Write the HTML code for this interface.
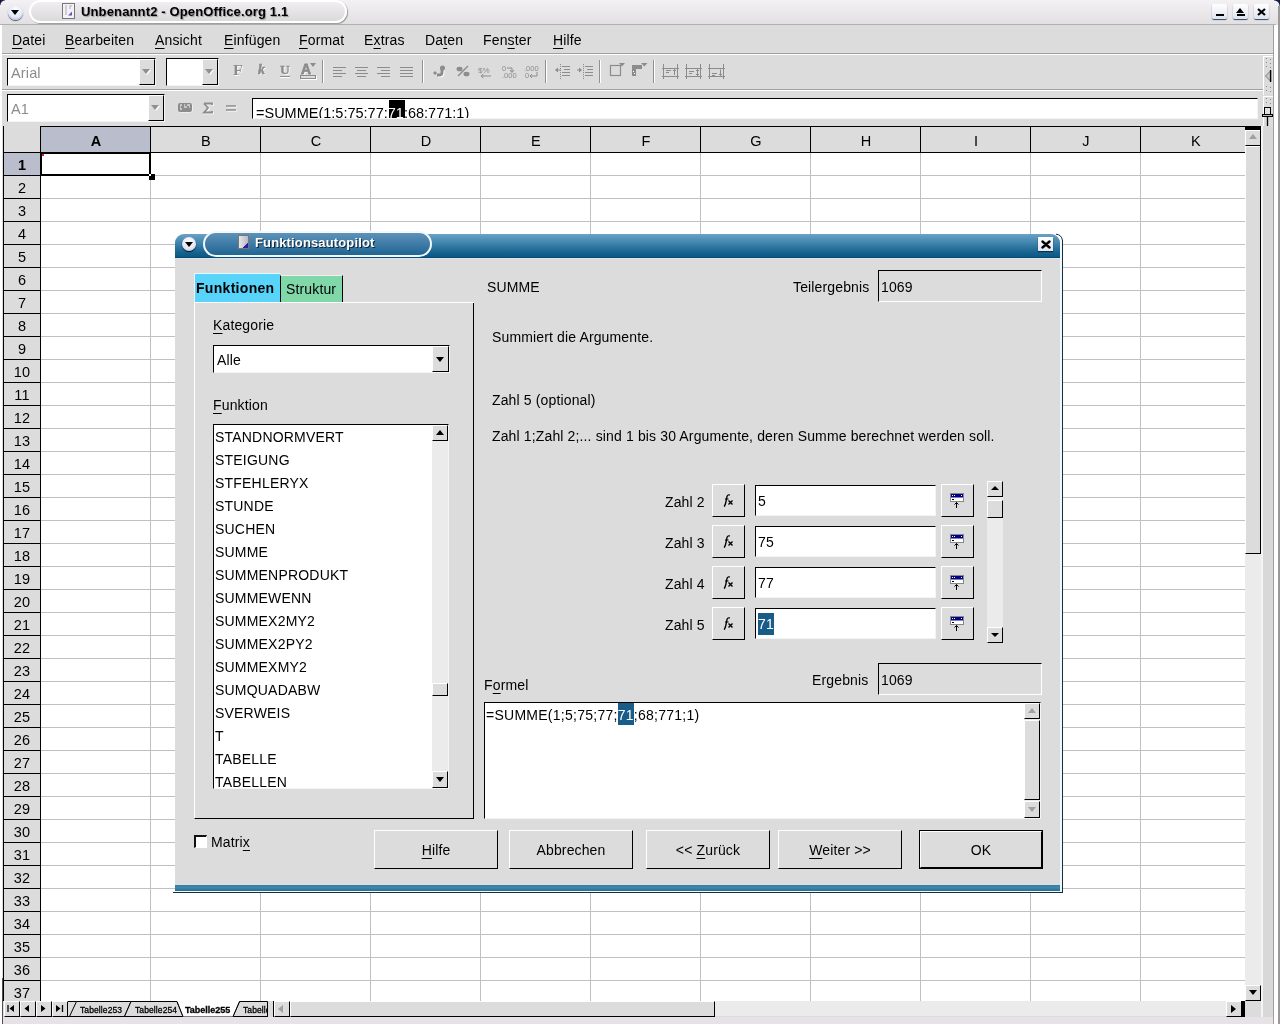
<!DOCTYPE html><html><head><meta charset="utf-8"><style>
*{box-sizing:border-box;margin:0;padding:0}
html,body{width:1280px;height:1024px;overflow:hidden;background:#dcdcdc;font-family:"Liberation Sans",sans-serif;position:relative;color:#000}
div,span{position:absolute}
.u{text-decoration:underline;text-underline-offset:3px;text-decoration-thickness:1px;position:static}
.t{white-space:nowrap;font-size:14px;line-height:16px;letter-spacing:0.14px}
.b3{background:#dcdcdc;border-top:1px solid #fff;border-left:1px solid #fff;border-right:1px solid #000;border-bottom:1px solid #000}
.sunk{background:#fff;border-top:1px solid #000;border-left:1px solid #000;border-right:1px solid #f4f4f4;border-bottom:1px solid #f4f4f4}
.hl{left:0;height:1px;background:#c0c0c0}
.vl{top:0;width:1px;background:#c0c0c0}
</style></head><body><div id="root" style="left:0;top:0;width:1280px;height:1024px;background:#dcdcdc;will-change:transform;overflow:hidden">
<div style="left:0;top:0;width:1280px;height:25px;background:linear-gradient(#f3f1f3,#e2dfe2);"></div>
<div style="left:0;top:24px;width:1276px;height:1px;background:#b0b0b0"></div>
<div style="left:0;top:0;width:5px;height:5px;background:radial-gradient(circle at 100% 100%,transparent 4px,#1a1a40 5px)"></div>
<div style="left:1274px;top:0;width:6px;height:6px;background:radial-gradient(circle at 0% 100%,transparent 5px,#1a1a40 6px)"></div>
<div style="left:8px;top:5px;width:15px;height:15px;border-radius:50%;background:radial-gradient(circle at 50% 35%,#fff,#dfe6f5 60%,#8b95b0);box-shadow:0 1px 1px #556"></div>
<div style="left:11px;top:10px;width:0;height:0;border-left:4.5px solid transparent;border-right:4.5px solid transparent;border-top:5px solid #000"></div>
<div style="left:29px;top:0px;width:318px;height:23px;border-radius:12px;border:2px solid #fff;background:linear-gradient(#f0eef0,#dcd9dc);box-shadow:1px 1px 1px #999"></div>
<svg style="position:absolute;left:62px;top:3px" width="13" height="16"><rect x="0.5" y="0.5" width="12" height="15" fill="#f4f2f8" stroke="#777"/><path d="M3 3H5M7 3H10M3 5H5M7 5H9M3 7H5M3 9H5M3 11H5" stroke="#aaa" stroke-width="1"/><path d="M6 12.5L10 8.5V12.5Z" fill="#6a58b0"/></svg>
<div class="t" style="left:81px;top:4px;font-size:13px;font-weight:bold;text-shadow:1px 1px 1px #999">Unbenannt2 - OpenOffice.org 1.1</div>
<div style="left:1212px;top:4px;width:15px;height:15px;border-radius:2px;background:linear-gradient(#fff,#dde4f0);box-shadow:0 1px 1px #345"></div>
<div style="left:1233px;top:4px;width:15px;height:15px;border-radius:2px;background:linear-gradient(#fff,#dde4f0);box-shadow:0 1px 1px #345"></div>
<div style="left:1254px;top:4px;width:15px;height:15px;border-radius:2px;background:linear-gradient(#fff,#dde4f0);box-shadow:0 1px 1px #345"></div>
<div style="left:1216px;top:14px;width:8px;height:2px;background:#000"></div>
<div style="left:1236px;top:8px;width:0;height:0;border-left:4.5px solid transparent;border-right:4.5px solid transparent;border-bottom:5px solid #000"></div>
<div style="left:1237px;top:14px;width:8px;height:2px;background:#000"></div>
<svg style="position:absolute;left:1257px;top:8px" width="9" height="8"><path d="M1 1L8 7M8 1L1 7" stroke="#000" stroke-width="2.2"/></svg>
<div class="t" style="left:12px;top:32px;font-size:14px;letter-spacing:0.15px"><span class="u">D</span>atei</div>
<div class="t" style="left:65px;top:32px;font-size:14px;letter-spacing:0.15px"><span class="u">B</span>earbeiten</div>
<div class="t" style="left:155px;top:32px;font-size:14px;letter-spacing:0.15px"><span class="u">A</span>nsicht</div>
<div class="t" style="left:224px;top:32px;font-size:14px;letter-spacing:0.15px"><span class="u">E</span>infügen</div>
<div class="t" style="left:299px;top:32px;font-size:14px;letter-spacing:0.15px"><span class="u">F</span>ormat</div>
<div class="t" style="left:364px;top:32px;font-size:14px;letter-spacing:0.15px">E<span class="u">x</span>tras</div>
<div class="t" style="left:425px;top:32px;font-size:14px;letter-spacing:0.15px">Da<span class="u">t</span>en</div>
<div class="t" style="left:483px;top:32px;font-size:14px;letter-spacing:0.15px">Fen<span class="u">s</span>ter</div>
<div class="t" style="left:553px;top:32px;font-size:14px;letter-spacing:0.15px"><span class="u">H</span>ilfe</div>
<div style="left:2px;top:53px;width:1271px;height:1px;background:#a0a0a0"></div>
<div style="left:2px;top:54px;width:1271px;height:1px;background:#fff"></div>
<div style="left:2px;top:89px;width:1271px;height:1px;background:#a0a0a0"></div>
<div style="left:2px;top:90px;width:1271px;height:1px;background:#fff"></div>
<div style="left:7px;top:58px;width:149px;height:28px;background:#fff;border-top:1px solid #000;border-left:1px solid #000;border-right:1px solid #f4f4f4;border-bottom:1px solid #f4f4f4"></div>
<div style="left:139px;top:59px;width:16px;height:26px;background:#dcdcdc;border-top:1px solid #fff;border-left:1px solid #fff;border-right:1px solid #000;border-bottom:1px solid #000"></div>
<div style="left:143px;top:70px;width:0;height:0;border-left:4px solid transparent;border-right:4px solid transparent;border-top:5px solid #fff"></div>
<div style="left:142px;top:69px;width:0;height:0;border-left:4px solid transparent;border-right:4px solid transparent;border-top:5px solid #909090"></div>
<div class="t" style="left:11px;top:65px;font-size:14.5px;color:#8c8c8c">Arial</div>
<div style="left:166px;top:58px;width:53px;height:28px;background:#fff;border-top:1px solid #000;border-left:1px solid #000;border-right:1px solid #f4f4f4;border-bottom:1px solid #f4f4f4"></div>
<div style="left:202px;top:59px;width:16px;height:26px;background:#dcdcdc;border-top:1px solid #fff;border-left:1px solid #fff;border-right:1px solid #000;border-bottom:1px solid #000"></div>
<div style="left:206px;top:70px;width:0;height:0;border-left:4px solid transparent;border-right:4px solid transparent;border-top:5px solid #fff"></div>
<div style="left:205px;top:69px;width:0;height:0;border-left:4px solid transparent;border-right:4px solid transparent;border-top:5px solid #909090"></div>
<div class="t" style="left:233px;top:62px;font:bold 14.5px 'Liberation Serif',serif;color:#8c8c8c;letter-spacing:0;text-shadow:1px 1px 0 #fff;transform:scaleX(1.12);transform-origin:0 0">F</div>
<div class="t" style="left:258px;top:62px;font:bold italic 14px 'Liberation Serif',serif;color:#8c8c8c;text-shadow:1px 1px 0 #fff;-webkit-text-stroke:0.5px #8c8c8c">k</div>
<div class="t" style="left:280px;top:62px;font:bold 13.5px 'Liberation Serif',serif;color:#8c8c8c;text-shadow:1px 1px 0 #fff;-webkit-text-stroke:0.3px #8c8c8c">U</div>
<div style="left:280px;top:76px;width:10px;height:1px;background:#8c8c8c;box-shadow:0 1px 0 #fff"></div>
<div class="t" style="left:301px;top:61px;font:bold 14px 'Liberation Sans',sans-serif;color:#8c8c8c;text-shadow:1px 1px 0 #fff;-webkit-text-stroke:0.8px #8c8c8c">A</div>
<div style="left:300px;top:75px;width:16px;height:4px;border:1px solid #8c8c8c;box-shadow:1px 1px 0 #fff"></div>
<div style="left:310px;top:63px;width:0;height:0;border-left:3.5px solid transparent;border-right:3.5px solid transparent;border-top:4px solid #8c8c8c"></div>
<div style="left:322px;top:60px;width:1px;height:23px;background:#909090"></div>
<div style="left:323px;top:60px;width:1px;height:23px;background:#fff"></div>
<div style="left:333px;top:67px;width:13px;height:1px;background:#8c8c8c"></div>
<div style="left:333px;top:70px;width:9px;height:1px;background:#8c8c8c"></div>
<div style="left:333px;top:73px;width:13px;height:1px;background:#8c8c8c"></div>
<div style="left:333px;top:76px;width:9px;height:1px;background:#8c8c8c"></div>
<div style="left:355px;top:67px;width:13px;height:1px;background:#8c8c8c"></div>
<div style="left:357px;top:70px;width:9px;height:1px;background:#8c8c8c"></div>
<div style="left:355px;top:73px;width:13px;height:1px;background:#8c8c8c"></div>
<div style="left:357px;top:76px;width:9px;height:1px;background:#8c8c8c"></div>
<div style="left:377px;top:67px;width:13px;height:1px;background:#8c8c8c"></div>
<div style="left:381px;top:70px;width:9px;height:1px;background:#8c8c8c"></div>
<div style="left:377px;top:73px;width:13px;height:1px;background:#8c8c8c"></div>
<div style="left:381px;top:76px;width:9px;height:1px;background:#8c8c8c"></div>
<div style="left:400px;top:67px;width:13px;height:1px;background:#8c8c8c"></div>
<div style="left:400px;top:70px;width:13px;height:1px;background:#8c8c8c"></div>
<div style="left:400px;top:73px;width:13px;height:1px;background:#8c8c8c"></div>
<div style="left:400px;top:76px;width:13px;height:1px;background:#8c8c8c"></div>
<div style="left:422px;top:60px;width:1px;height:23px;background:#909090"></div>
<div style="left:423px;top:60px;width:1px;height:23px;background:#fff"></div>
<svg style="position:absolute;left:428px;top:58px" width="300" height="26" fill="none" stroke="#8c8c8c"><g transform="translate(1,1)" stroke="#fff" fill="#fff" opacity="0.9"><path d="M14 9V14Q14 17 11 17H9" stroke-width="3"/></g><path d="M14 9V14Q14 17 11 17H9" stroke-width="3"/><circle cx="14.5" cy="10" r="2.5" fill="#8c8c8c" stroke="none"/><path d="M5 15L7 13L9 15L7 17Z" fill="#8c8c8c" stroke="none"/><path d="M30 18L40 8" stroke-width="1.5"/><ellipse cx="31.5" cy="11" rx="3" ry="2.3" fill="#8c8c8c" stroke="none"/><ellipse cx="38.5" cy="16" rx="3" ry="2.3" fill="#8c8c8c" stroke="none"/><text x="50" y="15" font-family="Liberation Sans" font-size="8" fill="#8c8c8c" stroke="none">$%</text><path d="M53 18H63M53 18L55.5 16M53 18L55.5 20" stroke-width="1"/><text x="74" y="13" font-family="Liberation Sans" font-size="7.5" fill="#8c8c8c" stroke="none">0</text><path d="M79 10H84V14M82 12L84 14.5L86 12" stroke-width="1"/><text x="74" y="20" font-family="Liberation Sans" font-size="7.5" fill="#8c8c8c" stroke="none">.000</text><text x="96" y="13" font-family="Liberation Sans" font-size="7.5" fill="#8c8c8c" stroke="none">.000</text><text x="97" y="20" font-family="Liberation Sans" font-size="7.5" fill="#8c8c8c" stroke="none">0</text><path d="M109 14V18H102M104 16L102 18L104 20" stroke-width="1"/><path d="M134 8.5H142M136 11.5H142M134 14.5H142M134 17.5H142" stroke-width="1"/><path d="M132.5 6V21" stroke-width="1" stroke-dasharray="1 1"/><path d="M127 12L130 9.5V14.5Z" fill="#8c8c8c" stroke="none"/><path d="M130 12H133" stroke-width="1"/><path d="M157 8.5H165M159 11.5H165M157 14.5H165M157 17.5H165" stroke-width="1"/><path d="M155.5 6V21" stroke-width="1" stroke-dasharray="1 1"/><path d="M154 12L151 9.5V14.5Z" fill="#8c8c8c" stroke="none"/><path d="M149 12H152" stroke-width="1"/><rect x="182.5" y="7.5" width="10" height="10" stroke-width="1.2"/><path d="M191 5H197L194 8.5Z" fill="#8c8c8c" stroke="none"/><path d="M204 7H214V11H208V18H204Z" fill="#8c8c8c" stroke="none"/><path d="M213 5H219.5L216.3 8.5Z" fill="#8c8c8c" stroke="none"/><rect x="205" y="13" width="1" height="1" fill="#fff" stroke="none"/><rect x="206" y="15" width="1" height="1" fill="#fff" stroke="none"/><path d="M235.5 6V21M249.5 6V21M234 10.5H251M234 18.5H251" stroke-width="1"/><path d="M238 12.5H243M238 14.5H241M246.5 17V11.5M245 13L246.5 11.5L248 13" stroke-width="1"/><path d="M258.5 6V21M272.5 6V21M257 10.5H274M257 18.5H274" stroke-width="1"/><path d="M261 13.5H266M261 15.5H264M269.5 11.5V17.5M268 13L269.5 11.5L271 13M268 16L269.5 17.5L271 16" stroke-width="1"/><path d="M281.5 6V21M295.5 6V21M280 10.5H297M280 18.5H297" stroke-width="1"/><path d="M284 15.5H289M284 17.5H287M292.5 11.5V17.5M291 16L292.5 17.5L294 16" stroke-width="1"/></svg>
<div style="left:545px;top:60px;width:1px;height:23px;background:#909090"></div>
<div style="left:546px;top:60px;width:1px;height:23px;background:#fff"></div>
<div style="left:599px;top:60px;width:1px;height:23px;background:#909090"></div>
<div style="left:600px;top:60px;width:1px;height:23px;background:#fff"></div>
<div style="left:653px;top:60px;width:1px;height:23px;background:#909090"></div>
<div style="left:654px;top:60px;width:1px;height:23px;background:#fff"></div>
<div style="left:1263px;top:56px;width:10px;height:39px;background:#dcdcdc;border-left:1px solid #fff;border-top:1px solid #fff"></div>
<div style="left:1266px;top:58px;width:1px;height:1px;background:#888"></div><div style="left:1270px;top:59px;width:1px;height:1px;background:#888"></div>
<div style="left:1266px;top:62px;width:1px;height:1px;background:#888"></div><div style="left:1270px;top:63px;width:1px;height:1px;background:#888"></div>
<div style="left:1266px;top:66px;width:1px;height:1px;background:#888"></div><div style="left:1270px;top:67px;width:1px;height:1px;background:#888"></div>
<div style="left:1266px;top:86px;width:1px;height:1px;background:#888"></div><div style="left:1270px;top:87px;width:1px;height:1px;background:#888"></div>
<div style="left:1266px;top:90px;width:1px;height:1px;background:#888"></div><div style="left:1270px;top:91px;width:1px;height:1px;background:#888"></div>
<svg style="position:absolute;left:1265px;top:70px" width="7" height="12"><path d="M6 0.5L0.5 6L6 11.5Z" fill="#c8c8c8" stroke="#777" stroke-width="1"/><path d="M5.5 0V12" stroke="#000" stroke-width="1.2"/></svg>
<div style="left:7px;top:94px;width:158px;height:28px;background:#fff;border-top:1px solid #000;border-left:1px solid #000;border-right:1px solid #f4f4f4;border-bottom:1px solid #f4f4f4"></div>
<div style="left:148px;top:95px;width:16px;height:26px;background:#dcdcdc;border-top:1px solid #fff;border-left:1px solid #fff;border-right:1px solid #000;border-bottom:1px solid #000"></div>
<div style="left:152px;top:106px;width:0;height:0;border-left:4px solid transparent;border-right:4px solid transparent;border-top:5px solid #fff"></div>
<div style="left:151px;top:105px;width:0;height:0;border-left:4px solid transparent;border-right:4px solid transparent;border-top:5px solid #909090"></div>
<div class="t" style="left:11px;top:101px;font-size:14.5px;color:#8c8c8c">A1</div>
<svg style="position:absolute;left:176px;top:101px" width="64" height="14"><rect x="2.5" y="2.5" width="14" height="9" rx="2" fill="#fff" stroke="none"/><rect x="2" y="2" width="14" height="9" rx="2" fill="#8c8c8c"/><path d="M4 4H6M4 6H5M4 8H6M8 4H9M8 6H11M11 4H14M13 6H14" stroke="#fff" stroke-width="1"/><path d="M28 2.5H36V4M28 2.5L32 7L28 11.5H36V10" fill="none" stroke="#fff" stroke-width="2" transform="translate(0.7,0.7)"/><path d="M28 2.5H36V4M28 2.5L32 7L28 11.5H36V10" fill="none" stroke="#8c8c8c" stroke-width="1.8"/><path d="M50 5H60M50 9H60" stroke="#fff" stroke-width="1.5" transform="translate(0.7,0.7)"/><path d="M50 5H60M50 9H60" stroke="#8c8c8c" stroke-width="1.6"/></svg>
<div style="left:252px;top:98px;width:1006px;height:21px;background:#fff;border-top:1px solid #000;border-left:1px solid #000;border-right:1px solid #f4f4f4;border-bottom:1px solid #f4f4f4;overflow:hidden"><div style="left:136px;top:1px;width:16px;height:18px;background:#000"></div><span id="fx" class="t" style="left:3px;top:6px;font-size:14.5px;letter-spacing:0px">=SUMME(1;5;75;77;<span style="position:static;color:#fff">71</span>;68;771;1)</span></div>
<div style="left:1263px;top:96px;width:10px;height:40px;background:#dcdcdc;border-left:1px solid #fff;border-top:1px solid #fff"></div>
<div style="left:1266px;top:98px;width:1px;height:1px;background:#888"></div><div style="left:1270px;top:99px;width:1px;height:1px;background:#888"></div>
<div style="left:1266px;top:102px;width:1px;height:1px;background:#888"></div><div style="left:1270px;top:103px;width:1px;height:1px;background:#888"></div>
<div style="left:1266px;top:128px;width:1px;height:1px;background:#888"></div><div style="left:1270px;top:129px;width:1px;height:1px;background:#888"></div>
<div style="left:1266px;top:132px;width:1px;height:1px;background:#888"></div><div style="left:1270px;top:133px;width:1px;height:1px;background:#888"></div>
<svg style="position:absolute;left:1262px;top:107px" width="11" height="19"><rect x="2.5" y="0.5" width="6" height="7" fill="#e0e0e0" stroke="#000"/><rect x="0.5" y="7.5" width="10" height="2" fill="#bbb" stroke="#000"/><path d="M5.5 10V19" stroke="#000" stroke-width="1.3"/></svg>
<div style="left:3px;top:126px;width:1259px;height:876px;background:#fff"></div>
<div style="left:3px;top:126px;width:1242px;height:27px;background:#dcdcdc;border-top:1px solid #000;border-bottom:1px solid #000"></div>
<div style="left:40px;top:127px;width:110px;height:25px;background:#babdcc"></div>
<div style="left:3px;top:126px;width:38px;height:875px;background:#dcdcdc;border-left:1px solid #000;border-right:1px solid #000"></div>
<div style="left:4px;top:153px;width:36px;height:22px;background:#babdcc"></div>
<div style="left:4px;top:152px;width:37px;height:1px;background:#000"></div>
<div style="left:40px;top:127px;width:1px;height:25px;background:#000"></div>
<div class="t" style="left:41px;top:132.5px;width:110px;text-align:center;font-size:14.5px;font-weight:bold">A</div>
<div style="left:150px;top:127px;width:1px;height:25px;background:#000"></div>
<div class="vl" style="left:150px;top:153px;height:848px"></div>
<div class="t" style="left:151px;top:132.5px;width:110px;text-align:center;font-size:14.5px;font-weight:normal">B</div>
<div style="left:260px;top:127px;width:1px;height:25px;background:#000"></div>
<div class="vl" style="left:260px;top:153px;height:848px"></div>
<div class="t" style="left:261px;top:132.5px;width:110px;text-align:center;font-size:14.5px;font-weight:normal">C</div>
<div style="left:370px;top:127px;width:1px;height:25px;background:#000"></div>
<div class="vl" style="left:370px;top:153px;height:848px"></div>
<div class="t" style="left:371px;top:132.5px;width:110px;text-align:center;font-size:14.5px;font-weight:normal">D</div>
<div style="left:480px;top:127px;width:1px;height:25px;background:#000"></div>
<div class="vl" style="left:480px;top:153px;height:848px"></div>
<div class="t" style="left:481px;top:132.5px;width:110px;text-align:center;font-size:14.5px;font-weight:normal">E</div>
<div style="left:590px;top:127px;width:1px;height:25px;background:#000"></div>
<div class="vl" style="left:590px;top:153px;height:848px"></div>
<div class="t" style="left:591px;top:132.5px;width:110px;text-align:center;font-size:14.5px;font-weight:normal">F</div>
<div style="left:700px;top:127px;width:1px;height:25px;background:#000"></div>
<div class="vl" style="left:700px;top:153px;height:848px"></div>
<div class="t" style="left:701px;top:132.5px;width:110px;text-align:center;font-size:14.5px;font-weight:normal">G</div>
<div style="left:810px;top:127px;width:1px;height:25px;background:#000"></div>
<div class="vl" style="left:810px;top:153px;height:848px"></div>
<div class="t" style="left:811px;top:132.5px;width:110px;text-align:center;font-size:14.5px;font-weight:normal">H</div>
<div style="left:920px;top:127px;width:1px;height:25px;background:#000"></div>
<div class="vl" style="left:920px;top:153px;height:848px"></div>
<div class="t" style="left:921px;top:132.5px;width:110px;text-align:center;font-size:14.5px;font-weight:normal">I</div>
<div style="left:1030px;top:127px;width:1px;height:25px;background:#000"></div>
<div class="vl" style="left:1030px;top:153px;height:848px"></div>
<div class="t" style="left:1031px;top:132.5px;width:110px;text-align:center;font-size:14.5px;font-weight:normal">J</div>
<div style="left:1140px;top:127px;width:1px;height:25px;background:#000"></div>
<div class="vl" style="left:1140px;top:153px;height:848px"></div>
<div class="t" style="left:1141px;top:132.5px;width:110px;text-align:center;font-size:14.5px;font-weight:normal">K</div>
<div class="hl" style="left:41px;top:175px;width:1204px"></div>
<div style="left:4px;top:175px;width:36px;height:1px;background:#000"></div>
<div class="t" style="left:4px;top:157px;width:36px;text-align:center;font-size:14.5px;font-weight:bold">1</div>
<div class="hl" style="left:41px;top:198px;width:1204px"></div>
<div style="left:4px;top:198px;width:36px;height:1px;background:#000"></div>
<div class="t" style="left:4px;top:180px;width:36px;text-align:center;font-size:14.5px;font-weight:normal">2</div>
<div class="hl" style="left:41px;top:221px;width:1204px"></div>
<div style="left:4px;top:221px;width:36px;height:1px;background:#000"></div>
<div class="t" style="left:4px;top:203px;width:36px;text-align:center;font-size:14.5px;font-weight:normal">3</div>
<div class="hl" style="left:41px;top:244px;width:1204px"></div>
<div style="left:4px;top:244px;width:36px;height:1px;background:#000"></div>
<div class="t" style="left:4px;top:226px;width:36px;text-align:center;font-size:14.5px;font-weight:normal">4</div>
<div class="hl" style="left:41px;top:267px;width:1204px"></div>
<div style="left:4px;top:267px;width:36px;height:1px;background:#000"></div>
<div class="t" style="left:4px;top:249px;width:36px;text-align:center;font-size:14.5px;font-weight:normal">5</div>
<div class="hl" style="left:41px;top:290px;width:1204px"></div>
<div style="left:4px;top:290px;width:36px;height:1px;background:#000"></div>
<div class="t" style="left:4px;top:272px;width:36px;text-align:center;font-size:14.5px;font-weight:normal">6</div>
<div class="hl" style="left:41px;top:313px;width:1204px"></div>
<div style="left:4px;top:313px;width:36px;height:1px;background:#000"></div>
<div class="t" style="left:4px;top:295px;width:36px;text-align:center;font-size:14.5px;font-weight:normal">7</div>
<div class="hl" style="left:41px;top:336px;width:1204px"></div>
<div style="left:4px;top:336px;width:36px;height:1px;background:#000"></div>
<div class="t" style="left:4px;top:318px;width:36px;text-align:center;font-size:14.5px;font-weight:normal">8</div>
<div class="hl" style="left:41px;top:359px;width:1204px"></div>
<div style="left:4px;top:359px;width:36px;height:1px;background:#000"></div>
<div class="t" style="left:4px;top:341px;width:36px;text-align:center;font-size:14.5px;font-weight:normal">9</div>
<div class="hl" style="left:41px;top:382px;width:1204px"></div>
<div style="left:4px;top:382px;width:36px;height:1px;background:#000"></div>
<div class="t" style="left:4px;top:364px;width:36px;text-align:center;font-size:14.5px;font-weight:normal">10</div>
<div class="hl" style="left:41px;top:405px;width:1204px"></div>
<div style="left:4px;top:405px;width:36px;height:1px;background:#000"></div>
<div class="t" style="left:4px;top:387px;width:36px;text-align:center;font-size:14.5px;font-weight:normal">11</div>
<div class="hl" style="left:41px;top:428px;width:1204px"></div>
<div style="left:4px;top:428px;width:36px;height:1px;background:#000"></div>
<div class="t" style="left:4px;top:410px;width:36px;text-align:center;font-size:14.5px;font-weight:normal">12</div>
<div class="hl" style="left:41px;top:451px;width:1204px"></div>
<div style="left:4px;top:451px;width:36px;height:1px;background:#000"></div>
<div class="t" style="left:4px;top:433px;width:36px;text-align:center;font-size:14.5px;font-weight:normal">13</div>
<div class="hl" style="left:41px;top:474px;width:1204px"></div>
<div style="left:4px;top:474px;width:36px;height:1px;background:#000"></div>
<div class="t" style="left:4px;top:456px;width:36px;text-align:center;font-size:14.5px;font-weight:normal">14</div>
<div class="hl" style="left:41px;top:497px;width:1204px"></div>
<div style="left:4px;top:497px;width:36px;height:1px;background:#000"></div>
<div class="t" style="left:4px;top:479px;width:36px;text-align:center;font-size:14.5px;font-weight:normal">15</div>
<div class="hl" style="left:41px;top:520px;width:1204px"></div>
<div style="left:4px;top:520px;width:36px;height:1px;background:#000"></div>
<div class="t" style="left:4px;top:502px;width:36px;text-align:center;font-size:14.5px;font-weight:normal">16</div>
<div class="hl" style="left:41px;top:543px;width:1204px"></div>
<div style="left:4px;top:543px;width:36px;height:1px;background:#000"></div>
<div class="t" style="left:4px;top:525px;width:36px;text-align:center;font-size:14.5px;font-weight:normal">17</div>
<div class="hl" style="left:41px;top:566px;width:1204px"></div>
<div style="left:4px;top:566px;width:36px;height:1px;background:#000"></div>
<div class="t" style="left:4px;top:548px;width:36px;text-align:center;font-size:14.5px;font-weight:normal">18</div>
<div class="hl" style="left:41px;top:589px;width:1204px"></div>
<div style="left:4px;top:589px;width:36px;height:1px;background:#000"></div>
<div class="t" style="left:4px;top:571px;width:36px;text-align:center;font-size:14.5px;font-weight:normal">19</div>
<div class="hl" style="left:41px;top:612px;width:1204px"></div>
<div style="left:4px;top:612px;width:36px;height:1px;background:#000"></div>
<div class="t" style="left:4px;top:594px;width:36px;text-align:center;font-size:14.5px;font-weight:normal">20</div>
<div class="hl" style="left:41px;top:635px;width:1204px"></div>
<div style="left:4px;top:635px;width:36px;height:1px;background:#000"></div>
<div class="t" style="left:4px;top:617px;width:36px;text-align:center;font-size:14.5px;font-weight:normal">21</div>
<div class="hl" style="left:41px;top:658px;width:1204px"></div>
<div style="left:4px;top:658px;width:36px;height:1px;background:#000"></div>
<div class="t" style="left:4px;top:640px;width:36px;text-align:center;font-size:14.5px;font-weight:normal">22</div>
<div class="hl" style="left:41px;top:681px;width:1204px"></div>
<div style="left:4px;top:681px;width:36px;height:1px;background:#000"></div>
<div class="t" style="left:4px;top:663px;width:36px;text-align:center;font-size:14.5px;font-weight:normal">23</div>
<div class="hl" style="left:41px;top:704px;width:1204px"></div>
<div style="left:4px;top:704px;width:36px;height:1px;background:#000"></div>
<div class="t" style="left:4px;top:686px;width:36px;text-align:center;font-size:14.5px;font-weight:normal">24</div>
<div class="hl" style="left:41px;top:727px;width:1204px"></div>
<div style="left:4px;top:727px;width:36px;height:1px;background:#000"></div>
<div class="t" style="left:4px;top:709px;width:36px;text-align:center;font-size:14.5px;font-weight:normal">25</div>
<div class="hl" style="left:41px;top:750px;width:1204px"></div>
<div style="left:4px;top:750px;width:36px;height:1px;background:#000"></div>
<div class="t" style="left:4px;top:732px;width:36px;text-align:center;font-size:14.5px;font-weight:normal">26</div>
<div class="hl" style="left:41px;top:773px;width:1204px"></div>
<div style="left:4px;top:773px;width:36px;height:1px;background:#000"></div>
<div class="t" style="left:4px;top:755px;width:36px;text-align:center;font-size:14.5px;font-weight:normal">27</div>
<div class="hl" style="left:41px;top:796px;width:1204px"></div>
<div style="left:4px;top:796px;width:36px;height:1px;background:#000"></div>
<div class="t" style="left:4px;top:778px;width:36px;text-align:center;font-size:14.5px;font-weight:normal">28</div>
<div class="hl" style="left:41px;top:819px;width:1204px"></div>
<div style="left:4px;top:819px;width:36px;height:1px;background:#000"></div>
<div class="t" style="left:4px;top:801px;width:36px;text-align:center;font-size:14.5px;font-weight:normal">29</div>
<div class="hl" style="left:41px;top:842px;width:1204px"></div>
<div style="left:4px;top:842px;width:36px;height:1px;background:#000"></div>
<div class="t" style="left:4px;top:824px;width:36px;text-align:center;font-size:14.5px;font-weight:normal">30</div>
<div class="hl" style="left:41px;top:865px;width:1204px"></div>
<div style="left:4px;top:865px;width:36px;height:1px;background:#000"></div>
<div class="t" style="left:4px;top:847px;width:36px;text-align:center;font-size:14.5px;font-weight:normal">31</div>
<div class="hl" style="left:41px;top:888px;width:1204px"></div>
<div style="left:4px;top:888px;width:36px;height:1px;background:#000"></div>
<div class="t" style="left:4px;top:870px;width:36px;text-align:center;font-size:14.5px;font-weight:normal">32</div>
<div class="hl" style="left:41px;top:911px;width:1204px"></div>
<div style="left:4px;top:911px;width:36px;height:1px;background:#000"></div>
<div class="t" style="left:4px;top:893px;width:36px;text-align:center;font-size:14.5px;font-weight:normal">33</div>
<div class="hl" style="left:41px;top:934px;width:1204px"></div>
<div style="left:4px;top:934px;width:36px;height:1px;background:#000"></div>
<div class="t" style="left:4px;top:916px;width:36px;text-align:center;font-size:14.5px;font-weight:normal">34</div>
<div class="hl" style="left:41px;top:957px;width:1204px"></div>
<div style="left:4px;top:957px;width:36px;height:1px;background:#000"></div>
<div class="t" style="left:4px;top:939px;width:36px;text-align:center;font-size:14.5px;font-weight:normal">35</div>
<div class="hl" style="left:41px;top:980px;width:1204px"></div>
<div style="left:4px;top:980px;width:36px;height:1px;background:#000"></div>
<div class="t" style="left:4px;top:962px;width:36px;text-align:center;font-size:14.5px;font-weight:normal">36</div>
<div class="hl" style="left:41px;top:1003px;width:1204px"></div>
<div style="left:4px;top:1003px;width:36px;height:1px;background:#000"></div>
<div class="t" style="left:4px;top:985px;width:36px;text-align:center;font-size:14.5px;font-weight:normal">37</div>
<div style="left:40px;top:152px;width:111px;height:24px;border:2px solid #000;background:#fff"></div>
<div style="left:149px;top:174px;width:6px;height:6px;background:#000"></div>
<div style="left:149px;top:174px;width:2px;height:2px;background:#fff"></div>
<div style="left:42px;top:154px;width:2px;height:2px;background:#d02020"></div>
<div style="left:1245px;top:126px;width:16px;height:875px;background:#ebebeb"></div>
<div style="left:1245px;top:126px;width:16px;height:4px;background:#000"></div>
<div style="left:1245px;top:130px;width:16px;height:16px;background:#dcdcdc;border-top:1px solid #fff;border-left:1px solid #fff;border-bottom:1px solid #000;border-right:1px solid #000"></div>
<div style="left:1249px;top:134px;width:0;height:0;border-left:4px solid transparent;border-right:4px solid transparent;border-bottom:5px solid #a0a0a0"></div>
<div style="left:1245px;top:146px;width:16px;height:408px;background:#dcdcdc;border-top:1px solid #fff;border-left:1px solid #fff;border-bottom:1px solid #000;border-right:1px solid #000"></div>
<div style="left:1260px;top:126px;width:1px;height:428px;background:#000"></div>
<div style="left:1245px;top:985px;width:16px;height:16px;background:#dcdcdc;border-top:1px solid #fff;border-left:1px solid #fff;border-bottom:1px solid #000;border-right:1px solid #000"></div>
<div style="left:1249px;top:990px;width:0;height:0;border-left:4px solid transparent;border-right:4px solid transparent;border-top:5px solid #000"></div>
<div style="left:1261px;top:126px;width:12px;height:892px;background:#d8d8d8;border-left:2px solid #f4f4f4;border-bottom:1px solid #a0a0a0"></div>
<div style="left:3px;top:1001px;width:1242px;height:16px;background:#dcdcdc"></div>
<div style="left:0;top:1017px;width:1273px;height:7px;background:#e6e2e6"></div>
<div style="left:2px;top:978px;width:1px;height:46px;background:#505050"></div>
<div style="left:4px;top:1001px;width:16px;height:16px;background:#dcdcdc;border-top:1px solid #fff;border-left:1px solid #fff;border-right:1px solid #000;border-bottom:1px solid #000"></div>
<div style="left:20px;top:1001px;width:16px;height:16px;background:#dcdcdc;border-top:1px solid #fff;border-left:1px solid #fff;border-right:1px solid #000;border-bottom:1px solid #000"></div>
<div style="left:36px;top:1001px;width:16px;height:16px;background:#dcdcdc;border-top:1px solid #fff;border-left:1px solid #fff;border-right:1px solid #000;border-bottom:1px solid #000"></div>
<div style="left:52px;top:1001px;width:16px;height:16px;background:#dcdcdc;border-top:1px solid #fff;border-left:1px solid #fff;border-right:1px solid #000;border-bottom:1px solid #000"></div>
<svg style="position:absolute;left:0;top:1000px" width="70" height="17"><path d="M8 5V12" stroke="#000" stroke-width="1.3"/><path d="M14 5L9.5 8.5L14 12Z" fill="#000"/><path d="M29 5L24.5 8.5L29 12Z" fill="#000"/><path d="M41 5L45.5 8.5L41 12Z" fill="#000"/><path d="M56 5L60.5 8.5L56 12Z" fill="#000"/><path d="M62.5 5V12" stroke="#000" stroke-width="1.3"/></svg>
<svg style="position:absolute;left:0;top:1000px" width="300" height="18"><path d="M68 16.5H268" stroke="#000" stroke-width="1"/><path d="M69.5 16.5L76.5 1.5H131L124.5 16.5Z" fill="#dcdcdc" stroke="#000" stroke-width="1"/><path d="M124.5 16.5L131 1.5H177L183 16.5Z" fill="#dcdcdc" stroke="#000" stroke-width="1"/><path d="M233 16.5L239.5 1.5H267.5V16.5Z" fill="#dcdcdc" stroke="#000" stroke-width="1"/><path d="M177 0.5L183 16.5H233L239.5 0.5Z" fill="#fff"/><path d="M177 1.5L183 16.5M233 16.5L239.5 1.5" stroke="#000" stroke-width="1"/><path d="M68 1.5H76.5" stroke="#000" stroke-width="1"/></svg>
<div class="t" style="left:80px;top:1004px;font-size:8.5px;line-height:12px;letter-spacing:0.1px;-webkit-text-stroke:0.3px #000">Tabelle253</div>
<div class="t" style="left:135px;top:1004px;font-size:8.5px;line-height:12px;letter-spacing:0.1px;-webkit-text-stroke:0.3px #000">Tabelle254</div>
<div class="t" style="left:185px;top:1004px;font-size:9px;line-height:12px;font-weight:bold;letter-spacing:0px;-webkit-text-stroke:0.3px #000">Tabelle255</div>
<div style="left:241px;top:1004px;width:26px;height:12px;overflow:hidden"><span class="t" style="left:2px;top:0;font-size:8.5px;line-height:12px;letter-spacing:0.1px;-webkit-text-stroke:0.3px #000">Tabelle</span></div>
<div style="left:273px;top:1001px;width:1px;height:16px;background:#000"></div>
<div style="left:274px;top:1001px;width:16px;height:16px;background:#dcdcdc;border-top:1px solid #fff;border-left:1px solid #fff;border-right:1px solid #000;border-bottom:1px solid #000"></div>
<div style="left:278px;top:1005px;border-top:4px solid transparent;border-bottom:4px solid transparent;border-right:5px solid #a0a0a0"></div>
<div style="left:290px;top:1001px;width:937px;height:16px;background:#ebebeb;border-bottom:1px solid #dcdcdc"></div>
<div style="left:290px;top:1001px;width:425px;height:16px;background:#dcdcdc;border-top:1px solid #fff;border-left:1px solid #fff;border-right:1px solid #000;border-bottom:1px solid #000"></div>
<div style="left:1226px;top:1001px;width:16px;height:16px;background:#dcdcdc;border-top:1px solid #fff;border-left:1px solid #fff;border-right:1px solid #000;border-bottom:1px solid #000"></div>
<div style="left:1241px;top:1001px;width:4px;height:16px;background:#000"></div>
<div style="left:1231px;top:1005px;border-top:4px solid transparent;border-bottom:4px solid transparent;border-left:5px solid #000"></div>
<div style="left:1245px;top:1001px;width:16px;height:16px;background:#dcdcdc"></div>
<div style="left:175px;top:234px;width:885px;height:658px;background:#dcdcdc;border-radius:9px 9px 0 0;overflow:hidden"><div style="left:0;top:0;width:885px;height:23px;background:linear-gradient(#6aa2c6,#3f84ad 40%,#16638f 80%,#0b5885)"></div><div style="left:0;top:23px;width:885px;height:1px;background:#074a72"></div><div style="left:0;top:24px;width:885px;height:1px;background:#dde6ea"></div><div style="left:0;top:650px;width:885px;height:1px;background:#cfe4f0"></div><div style="left:0;top:651px;width:885px;height:6px;background:linear-gradient(#3f7897,#3f88ae 40%,#2b6f92)"></div><div style="left:0;top:657px;width:885px;height:1px;background:#f0fafd"></div></div>
<div style="left:1060px;top:240px;width:2px;height:652px;background:#f0f8fb"></div>
<div style="left:1062px;top:240px;width:1px;height:653px;background:#12303f"></div>
<div style="left:173px;top:892px;width:890px;height:1px;background:#12303f"></div>
<svg style="position:absolute;left:1054px;top:233px" width="10" height="9"><path d="M2 1.2Q7.5 1.5 8.5 7.5" fill="none" stroke="#12303f" stroke-width="1"/></svg>
<div style="left:182px;top:237px;width:14px;height:14px;border-radius:50%;background:radial-gradient(circle at 50% 35%,#fff,#e6e6f0 60%,#9aa0b8);box-shadow:0 1px 1px #012"></div>
<div style="left:185px;top:242px;width:0;height:0;border-left:4px solid transparent;border-right:4px solid transparent;border-top:5px solid #000"></div>
<div style="left:203px;top:231px;width:229px;height:26px;border-radius:13px;border:2px solid #f4f8fb;background:linear-gradient(#5e92b9,#1f6594)"></div>
<div style="left:238px;top:235px;width:11px;height:14px;background:linear-gradient(90deg,#e8e8e8,#b8b8c8);border:1px solid #777"></div>
<div style="left:242px;top:242px;width:6px;height:6px;background:linear-gradient(135deg,transparent 50%,#3020a0 50%)"></div>
<div class="t" style="left:255px;top:235px;font-size:13px;font-weight:bold;color:#fff;text-shadow:1px 1px 0 #123">Funktionsautopilot</div>
<div style="left:1038px;top:237px;width:15px;height:14px;background:linear-gradient(#fff,#e2e6f0);box-shadow:0 1px 1px #0a3050"></div>
<svg style="position:absolute;left:1041px;top:240px" width="10" height="9"><path d="M1.5 1.5L8.5 7.5M8.5 1.5L1.5 7.5" stroke="#000" stroke-width="2.4" stroke-linecap="round"/></svg>
<div style="left:194px;top:273px;width:86px;height:30px;background:#58d4fa;border-top:1px solid #e8f8ff;border-left:1px solid #e8f8ff"></div>
<div class="t" style="left:196px;top:280px;font-size:14px;font-weight:bold;letter-spacing:0.3px">Funktionen</div>
<div style="left:280px;top:275px;width:63px;height:27px;background:#80d8a8;border-top:1px solid #f0f0f0;border-left:1px solid #000;border-right:1px solid #000"></div>
<div class="t" style="left:286px;top:281px;font-size:14px">Struktur</div>
<div style="left:194px;top:302px;width:280px;height:517px;border-top:1px solid #fff;border-left:1px solid #fff;border-right:1px solid #000;border-bottom:1px solid #000"></div>
<div style="left:280px;top:302px;width:194px;height:1px;background:#fff"></div>
<div class="t" style="left:213px;top:317px;font-size:14px"><span class="u">K</span>ategorie</div>
<div style="left:213px;top:345px;width:237px;height:28px;background:#fff;border-top:1px solid #000;border-left:1px solid #000;border-right:1px solid #f4f4f4;border-bottom:1px solid #f4f4f4"></div>
<div style="left:432px;top:346px;width:17px;height:26px;background:#dcdcdc;border-top:1px solid #fff;border-left:1px solid #fff;border-right:1px solid #000;border-bottom:1px solid #000"></div>
<div style="left:436px;top:357px;border-left:4px solid transparent;border-right:4px solid transparent;border-top:5px solid #000"></div>
<div class="t" style="left:217px;top:352px;font-size:14px">Alle</div>
<div class="t" style="left:213px;top:397px;font-size:14px"><span class="u">F</span>unktion</div>
<div class="sunk" style="left:213px;top:424px;width:236px;height:365px;overflow:hidden"></div>
<div style="left:214px;top:425px;width:218px;height:363px;overflow:hidden"><span class="t" style="left:1px;top:4px;font-size:14px;letter-spacing:0.2px">STANDNORMVERT</span><span class="t" style="left:1px;top:27px;font-size:14px;letter-spacing:0.2px">STEIGUNG</span><span class="t" style="left:1px;top:50px;font-size:14px;letter-spacing:0.2px">STFEHLERYX</span><span class="t" style="left:1px;top:73px;font-size:14px;letter-spacing:0.2px">STUNDE</span><span class="t" style="left:1px;top:96px;font-size:14px;letter-spacing:0.2px">SUCHEN</span><span class="t" style="left:1px;top:119px;font-size:14px;letter-spacing:0.2px">SUMME</span><span class="t" style="left:1px;top:142px;font-size:14px;letter-spacing:0.2px">SUMMENPRODUKT</span><span class="t" style="left:1px;top:165px;font-size:14px;letter-spacing:0.2px">SUMMEWENN</span><span class="t" style="left:1px;top:188px;font-size:14px;letter-spacing:0.2px">SUMMEX2MY2</span><span class="t" style="left:1px;top:211px;font-size:14px;letter-spacing:0.2px">SUMMEX2PY2</span><span class="t" style="left:1px;top:234px;font-size:14px;letter-spacing:0.2px">SUMMEXMY2</span><span class="t" style="left:1px;top:257px;font-size:14px;letter-spacing:0.2px">SUMQUADABW</span><span class="t" style="left:1px;top:280px;font-size:14px;letter-spacing:0.2px">SVERWEIS</span><span class="t" style="left:1px;top:303px;font-size:14px;letter-spacing:0.2px">T</span><span class="t" style="left:1px;top:326px;font-size:14px;letter-spacing:0.2px">TABELLE</span><span class="t" style="left:1px;top:349px;font-size:14px;letter-spacing:0.2px">TABELLEN</span></div>
<div style="left:432px;top:425px;width:16px;height:363px;background:#ebebeb"></div>
<div class="b3" style="left:432px;top:425px;width:16px;height:16px"></div>
<div style="left:436px;top:430px;border-left:4px solid transparent;border-right:4px solid transparent;border-bottom:5px solid #000"></div>
<div class="b3" style="left:432px;top:683px;width:16px;height:13px"></div>
<div class="b3" style="left:432px;top:771px;width:16px;height:17px"></div>
<div style="left:436px;top:777px;border-left:4px solid transparent;border-right:4px solid transparent;border-top:5px solid #000"></div>
<div class="t" style="left:487px;top:279px;font-size:14px">SUMME</div>
<div class="t" style="left:793px;top:279px;font-size:14px">Teilergebnis</div>
<div style="left:878px;top:270px;width:164px;height:32px;border-top:1px solid #000;border-left:1px solid #000;border-right:1px solid #fff;border-bottom:1px solid #fff"></div>
<div class="t" style="left:881px;top:279px;font-size:14px">1069</div>
<div class="t" style="left:492px;top:329px;font-size:14px">Summiert die Argumente.</div>
<div class="t" style="left:492px;top:392px;font-size:14px">Zahl 5 (optional)</div>
<div class="t" style="left:492px;top:428px;font-size:14px">Zahl 1;Zahl 2;... sind 1 bis 30 Argumente, deren Summe berechnet werden soll.</div>
<div class="t" style="left:665px;top:494px;font-size:14px">Zahl 2</div>
<div style="left:712px;top:484px;width:33px;height:33px;background:#dcdcdc;border-top:1px solid #fff;border-left:1px solid #fff;border-right:1px solid #000;border-bottom:1px solid #000"></div>
<svg style="position:absolute;left:722px;top:494px" width="12" height="13"><path d="M2 12.5C3 12 3.5 10 4 7.5L5 2.5C5.5 1 6.5 0.5 8 1" fill="none" stroke="#000" stroke-width="1.3"/><path d="M3 5H6.5" stroke="#000" stroke-width="1.1"/><path d="M6.5 6.5L10.5 10.5M10.5 6.5L6.5 10.5" stroke="#000" stroke-width="1.4"/></svg>
<div style="left:755px;top:485px;width:181px;height:31px;background:#fff;border-top:1px solid #000;border-left:1px solid #000;border-right:1px solid #f4f4f4;border-bottom:1px solid #f4f4f4"></div>
<div class="t" style="left:758px;top:493px;font-size:14px">5</div>
<div style="left:941px;top:484px;width:33px;height:33px;background:#dcdcdc;border-top:1px solid #fff;border-left:1px solid #fff;border-right:1px solid #000;border-bottom:1px solid #000"></div>
<svg style="position:absolute;left:950px;top:493px" width="15" height="15"><rect x="0.5" y="0.5" width="13" height="8" fill="#fff" stroke="#888"/><rect x="1" y="1" width="12" height="3.5" fill="#000080"/><rect x="2" y="2" width="1" height="1" fill="#fff"/><rect x="4" y="2" width="1" height="1" fill="#fff"/><rect x="11" y="2" width="1" height="1" fill="#fff"/><rect x="2" y="6" width="2" height="1" fill="#000"/><path d="M6.5 9.5V15M4.5 11.5L6.5 9.5L8.5 11.5" fill="none" stroke="#000" stroke-width="1"/></svg>
<div class="t" style="left:665px;top:535px;font-size:14px">Zahl 3</div>
<div style="left:712px;top:525px;width:33px;height:33px;background:#dcdcdc;border-top:1px solid #fff;border-left:1px solid #fff;border-right:1px solid #000;border-bottom:1px solid #000"></div>
<svg style="position:absolute;left:722px;top:535px" width="12" height="13"><path d="M2 12.5C3 12 3.5 10 4 7.5L5 2.5C5.5 1 6.5 0.5 8 1" fill="none" stroke="#000" stroke-width="1.3"/><path d="M3 5H6.5" stroke="#000" stroke-width="1.1"/><path d="M6.5 6.5L10.5 10.5M10.5 6.5L6.5 10.5" stroke="#000" stroke-width="1.4"/></svg>
<div style="left:755px;top:526px;width:181px;height:31px;background:#fff;border-top:1px solid #000;border-left:1px solid #000;border-right:1px solid #f4f4f4;border-bottom:1px solid #f4f4f4"></div>
<div class="t" style="left:758px;top:534px;font-size:14px">75</div>
<div style="left:941px;top:525px;width:33px;height:33px;background:#dcdcdc;border-top:1px solid #fff;border-left:1px solid #fff;border-right:1px solid #000;border-bottom:1px solid #000"></div>
<svg style="position:absolute;left:950px;top:534px" width="15" height="15"><rect x="0.5" y="0.5" width="13" height="8" fill="#fff" stroke="#888"/><rect x="1" y="1" width="12" height="3.5" fill="#000080"/><rect x="2" y="2" width="1" height="1" fill="#fff"/><rect x="4" y="2" width="1" height="1" fill="#fff"/><rect x="11" y="2" width="1" height="1" fill="#fff"/><rect x="2" y="6" width="2" height="1" fill="#000"/><path d="M6.5 9.5V15M4.5 11.5L6.5 9.5L8.5 11.5" fill="none" stroke="#000" stroke-width="1"/></svg>
<div class="t" style="left:665px;top:576px;font-size:14px">Zahl 4</div>
<div style="left:712px;top:566px;width:33px;height:33px;background:#dcdcdc;border-top:1px solid #fff;border-left:1px solid #fff;border-right:1px solid #000;border-bottom:1px solid #000"></div>
<svg style="position:absolute;left:722px;top:576px" width="12" height="13"><path d="M2 12.5C3 12 3.5 10 4 7.5L5 2.5C5.5 1 6.5 0.5 8 1" fill="none" stroke="#000" stroke-width="1.3"/><path d="M3 5H6.5" stroke="#000" stroke-width="1.1"/><path d="M6.5 6.5L10.5 10.5M10.5 6.5L6.5 10.5" stroke="#000" stroke-width="1.4"/></svg>
<div style="left:755px;top:567px;width:181px;height:31px;background:#fff;border-top:1px solid #000;border-left:1px solid #000;border-right:1px solid #f4f4f4;border-bottom:1px solid #f4f4f4"></div>
<div class="t" style="left:758px;top:575px;font-size:14px">77</div>
<div style="left:941px;top:566px;width:33px;height:33px;background:#dcdcdc;border-top:1px solid #fff;border-left:1px solid #fff;border-right:1px solid #000;border-bottom:1px solid #000"></div>
<svg style="position:absolute;left:950px;top:575px" width="15" height="15"><rect x="0.5" y="0.5" width="13" height="8" fill="#fff" stroke="#888"/><rect x="1" y="1" width="12" height="3.5" fill="#000080"/><rect x="2" y="2" width="1" height="1" fill="#fff"/><rect x="4" y="2" width="1" height="1" fill="#fff"/><rect x="11" y="2" width="1" height="1" fill="#fff"/><rect x="2" y="6" width="2" height="1" fill="#000"/><path d="M6.5 9.5V15M4.5 11.5L6.5 9.5L8.5 11.5" fill="none" stroke="#000" stroke-width="1"/></svg>
<div class="t" style="left:665px;top:617px;font-size:14px">Zahl 5</div>
<div style="left:712px;top:607px;width:33px;height:33px;background:#dcdcdc;border-top:1px solid #fff;border-left:1px solid #fff;border-right:1px solid #000;border-bottom:1px solid #000"></div>
<svg style="position:absolute;left:722px;top:617px" width="12" height="13"><path d="M2 12.5C3 12 3.5 10 4 7.5L5 2.5C5.5 1 6.5 0.5 8 1" fill="none" stroke="#000" stroke-width="1.3"/><path d="M3 5H6.5" stroke="#000" stroke-width="1.1"/><path d="M6.5 6.5L10.5 10.5M10.5 6.5L6.5 10.5" stroke="#000" stroke-width="1.4"/></svg>
<div style="left:755px;top:608px;width:181px;height:31px;background:#fff;border-top:1px solid #000;border-left:1px solid #000;border-right:1px solid #f4f4f4;border-bottom:1px solid #f4f4f4"></div>
<div style="left:758px;top:613px;width:16px;height:22px;background:#1a5c88"></div>
<div class="t" style="left:758px;top:616px;font-size:14px;color:#fff">71</div>
<div style="left:941px;top:607px;width:33px;height:33px;background:#dcdcdc;border-top:1px solid #fff;border-left:1px solid #fff;border-right:1px solid #000;border-bottom:1px solid #000"></div>
<svg style="position:absolute;left:950px;top:616px" width="15" height="15"><rect x="0.5" y="0.5" width="13" height="8" fill="#fff" stroke="#888"/><rect x="1" y="1" width="12" height="3.5" fill="#000080"/><rect x="2" y="2" width="1" height="1" fill="#fff"/><rect x="4" y="2" width="1" height="1" fill="#fff"/><rect x="11" y="2" width="1" height="1" fill="#fff"/><rect x="2" y="6" width="2" height="1" fill="#000"/><path d="M6.5 9.5V15M4.5 11.5L6.5 9.5L8.5 11.5" fill="none" stroke="#000" stroke-width="1"/></svg>
<div style="left:987px;top:481px;width:16px;height:162px;background:#ebebeb"></div>
<div style="left:987px;top:481px;width:16px;height:16px;background:#dcdcdc;border-top:1px solid #fff;border-left:1px solid #fff;border-right:1px solid #000;border-bottom:1px solid #000"></div>
<div style="left:991px;top:486px;border-left:4px solid transparent;border-right:4px solid transparent;border-bottom:4px solid #000"></div>
<div style="left:987px;top:500px;width:16px;height:18px;background:#dcdcdc;border-top:1px solid #fff;border-left:1px solid #fff;border-right:1px solid #000;border-bottom:1px solid #000"></div>
<div style="left:987px;top:627px;width:16px;height:16px;background:#dcdcdc;border-top:1px solid #fff;border-left:1px solid #fff;border-right:1px solid #000;border-bottom:1px solid #000"></div>
<div style="left:991px;top:633px;border-left:4px solid transparent;border-right:4px solid transparent;border-top:4px solid #000"></div>
<div class="t" style="left:484px;top:677px;font-size:14px">F<span class="u">o</span>rmel</div>
<div class="t" style="left:812px;top:672px;font-size:14px">Ergebnis</div>
<div style="left:878px;top:663px;width:164px;height:32px;border-top:1px solid #000;border-left:1px solid #000;border-right:1px solid #fff;border-bottom:1px solid #fff"></div>
<div class="t" style="left:881px;top:672px;font-size:14px">1069</div>
<div class="sunk" style="left:484px;top:702px;width:557px;height:117px"></div>
<div style="left:618px;top:703px;width:16px;height:22px;background:#1a5c88"></div>
<div class="t" style="left:486px;top:707px;font-size:14px;letter-spacing:0.26px">=SUMME(1;5;75;77;<span style="position:static;color:#fff">71</span>;68;771;1)</div>
<div style="left:1024px;top:703px;width:16px;height:115px;background:#ebebeb"></div>
<div class="b3" style="left:1024px;top:703px;width:16px;height:16px"></div>
<div style="left:1028px;top:708px;border-left:4px solid transparent;border-right:4px solid transparent;border-bottom:5px solid #a0a0a0"></div>
<div class="b3" style="left:1024px;top:720px;width:16px;height:80px"></div>
<div class="b3" style="left:1024px;top:801px;width:16px;height:17px"></div>
<div style="left:1028px;top:807px;border-left:4px solid transparent;border-right:4px solid transparent;border-top:5px solid #a0a0a0"></div>
<div style="left:194px;top:835px;width:13px;height:13px;background:#fff;border-top:2px solid #111;border-left:2px solid #111;border-right:1px solid #fff;border-bottom:1px solid #fff"></div>
<div class="t" style="left:211px;top:834px;font-size:14px">Matri<span class="u">x</span></div>
<div class="b3" style="left:374px;top:830px;width:124px;height:39px"></div>
<div class="t" style="left:374px;top:842px;width:124px;text-align:center;font-size:14px"><span class="u">H</span>ilfe</div>
<div class="b3" style="left:509px;top:830px;width:124px;height:39px"></div>
<div class="t" style="left:509px;top:842px;width:124px;text-align:center;font-size:14px">Abbrechen</div>
<div class="b3" style="left:646px;top:830px;width:124px;height:39px"></div>
<div class="t" style="left:646px;top:842px;width:124px;text-align:center;font-size:14px">&lt;&lt; <span class="u">Z</span>urück</div>
<div class="b3" style="left:778px;top:830px;width:124px;height:39px"></div>
<div class="t" style="left:778px;top:842px;width:124px;text-align:center;font-size:14px"><span class="u">W</span>eiter &gt;&gt;</div>
<div style="left:919px;top:830px;width:124px;height:39px;border:1px solid #000"></div>
<div class="b3" style="left:920px;top:831px;width:122px;height:37px"></div>
<div class="t" style="left:919px;top:842px;width:124px;text-align:center;font-size:14px">OK</div>
<div style="left:1273px;top:25px;width:1px;height:999px;background:#a0a0a0"></div>
<div style="left:1274px;top:25px;width:4px;height:999px;background:#fff"></div>
<div style="left:1278px;top:6px;width:2px;height:1018px;background:#999"></div>
<div style="left:0;top:25px;width:2px;height:999px;background:#fff"></div>
</div></body></html>
